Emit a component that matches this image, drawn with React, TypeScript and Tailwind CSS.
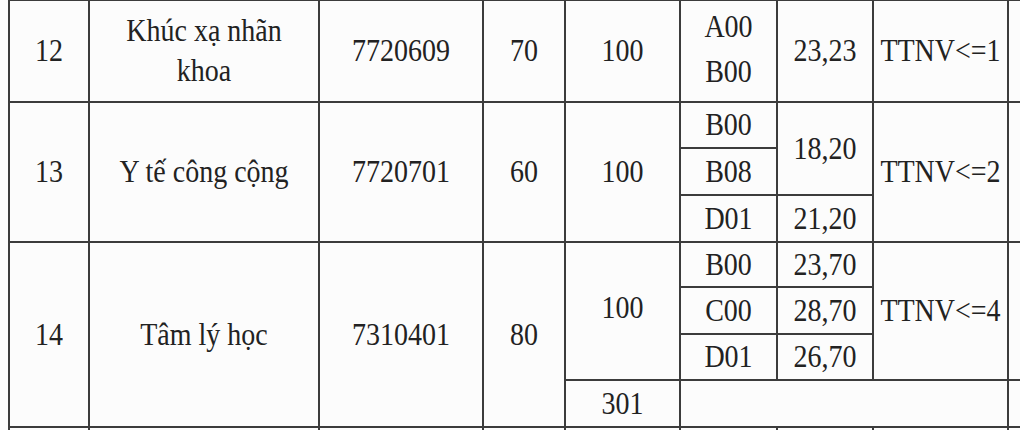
const cell = "border-2 border-[#3c3c3c] text-center align-middle p-0"

function T({ children }: { children: React.ReactNode }) {
  return <span className="inline-block scale-y-[1.12]">{children}</span>
}

export default function App() {
  return (
    <div className="w-[1020px] h-[430px] overflow-hidden bg-[#fcfcfc] text-[#222] font-[Liberation_Serif,Times_New_Roman,serif] text-[28px] leading-none">
      <table className="ml-[8px] -mt-[1px] border-collapse table-fixed w-[1112px]">
        <colgroup>
          <col className="w-[80px]" />
          <col className="w-[230px]" />
          <col className="w-[164px]" />
          <col className="w-[82px]" />
          <col className="w-[115px]" />
          <col className="w-[97px]" />
          <col className="w-[96px]" />
          <col className="w-[135px]" />
          <col className="w-[113px]" />
        </colgroup>
        <tbody>
          <tr className="h-[102px]">
            <td className={cell}><T>12</T></td>
            <td className={cell}>
              <div className="leading-[40px]"><T>Khúc xạ nhãn</T><br /><T>khoa</T></div>
            </td>
            <td className={cell}><T>7720609</T></td>
            <td className={cell}><T>70</T></td>
            <td className={cell}><T>100</T></td>
            <td className={cell}>
              <div className="leading-[45px] -mt-[4px]"><T>A00</T><br /><T>B00</T></div>
            </td>
            <td className={cell}><T>23,23</T></td>
            <td className={cell}><T>TTNV&lt;=1</T></td>
            <td className={cell}></td>
          </tr>
          <tr className="h-[46px]">
            <td className={cell} rowSpan={3}><T>13</T></td>
            <td className={cell} rowSpan={3}><T>Y tế công cộng</T></td>
            <td className={cell} rowSpan={3}><T>7720701</T></td>
            <td className={cell} rowSpan={3}><T>60</T></td>
            <td className={cell} rowSpan={3}><T>100</T></td>
            <td className={cell}><T>B00</T></td>
            <td className={cell} rowSpan={2}><T>18,20</T></td>
            <td className={cell} rowSpan={3}><T>TTNV&lt;=2</T></td>
            <td className={cell} rowSpan={3}></td>
          </tr>
          <tr className="h-[47px]">
            <td className={cell}><T>B08</T></td>
          </tr>
          <tr className="h-[47px]">
            <td className={cell}><T>D01</T></td>
            <td className={cell}><T>21,20</T></td>
          </tr>
          <tr className="h-[45px]">
            <td className={cell} rowSpan={4}><T>14</T></td>
            <td className={cell} rowSpan={4}><T>Tâm lý học</T></td>
            <td className={cell} rowSpan={4}><T>7310401</T></td>
            <td className={cell} rowSpan={4}><T>80</T></td>
            <td className={cell} rowSpan={3}><div className="-mt-[6px]"><T>100</T></div></td>
            <td className={cell}><T>B00</T></td>
            <td className={cell}><T>23,70</T></td>
            <td className={cell} rowSpan={3}><T>TTNV&lt;=4</T></td>
            <td className={cell} rowSpan={3}></td>
          </tr>
          <tr className="h-[47px]">
            <td className={cell}><T>C00</T></td>
            <td className={cell}><T>28,70</T></td>
          </tr>
          <tr className="h-[46px]">
            <td className={cell}><T>D01</T></td>
            <td className={cell}><T>26,70</T></td>
          </tr>
          <tr className="h-[47px]">
            <td className={cell}><T>301</T></td>
            <td className={cell} colSpan={3}></td>
            <td className={cell}></td>
          </tr>
          <tr className="h-[47px]">
            <td className={cell}></td>
            <td className={cell}></td>
            <td className={cell}></td>
            <td className={cell}></td>
            <td className={cell}></td>
            <td className={cell}></td>
            <td className={cell}></td>
            <td className={cell}></td>
            <td className={cell}></td>
          </tr>
        </tbody>
      </table>
    </div>
  )
}
